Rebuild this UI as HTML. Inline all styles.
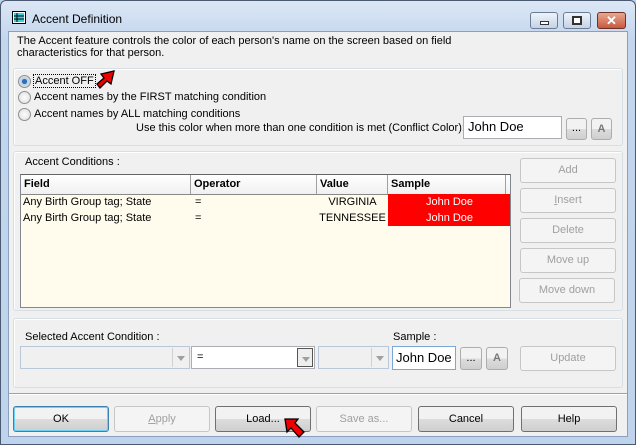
<!DOCTYPE html>
<html><head><style>
*{box-sizing:border-box;margin:0;padding:0}
body{width:636px;height:445px;overflow:hidden;font-family:"Liberation Sans",sans-serif;font-size:11px;color:#000;background:#bcd0ea}
.a{position:absolute;white-space:nowrap}
#win{position:absolute;left:0;top:0;width:636px;height:445px;background:linear-gradient(#dbe7f5,#c3d6ee 40px,#bfd3ec);border:1px solid #4a5a70;border-radius:6px 6px 0 0}
#client{position:absolute;left:8px;top:31px;width:620px;height:406px;background:#f0f0f0;border:1px solid #8aa0bc}
.grp{position:absolute;border:1px solid #d5dfe5;border-radius:3px;box-shadow:inset 1px 1px 0 #fff}
.btn{position:absolute;height:25px;border:1px solid #707070;border-radius:3px;background:linear-gradient(#f2f2f2 50%,#dddddd 50%,#cfcfcf);text-align:center;line-height:23px;font-size:11px;white-space:nowrap}
.dis{border-color:#c6c6c6;background:#f4f4f4;color:#a0a0a0}
.tb{position:absolute;background:#fff;border:1px solid #abadb3;font-size:13px;padding-left:4px;white-space:nowrap;overflow:hidden}
.radio{position:absolute;width:13px;height:13px;border-radius:50%;border:1px solid #8e8f8f;background:radial-gradient(#fdfdfd,#dcdcdc)}
.cb{position:absolute;height:23px;border:1px solid #b9c7d8;background:#f0f0f0}
.cb .ar{position:absolute;right:1px;top:1px;width:16px;height:19px;border-left:1px solid #d0d0d0}
.cb .ar:after{content:"";position:absolute;left:4px;top:8px;border:4px solid transparent;border-top:5px solid #a0a0a0}
.hd{position:absolute;top:0;height:19px;border-right:1px solid #a0a0a0;font-weight:bold;padding-left:3px;line-height:18px;background:linear-gradient(#fff,#f0f0f0)}
</style></head><body>
<div id="win">
<svg class="a" style="left:11px;top:10px" width="14" height="13"><rect x="0.5" y="0.5" width="13" height="12" fill="#fff" stroke="#000"/><rect x="2" y="2" width="10" height="9" fill="#3ad0e0"/><path d="M2 5h10M2 8h10M5 2v9" stroke="#000"/></svg>
<div class="a" style="left:31px;top:11px;font-size:12px">Accent Definition</div>
<div class="a" style="left:529px;top:11px;width:28px;height:17px;border:1px solid #6b7d95;border-radius:3px;background:linear-gradient(#eef3fa,#c4d3e6)"><div class="a" style="left:9px;top:8px;width:9px;height:4px;border:1px solid #333;background:#fff"></div></div>
<div class="a" style="left:562px;top:11px;width:28px;height:17px;border:1px solid #6b7d95;border-radius:3px;background:linear-gradient(#eef3fa,#c4d3e6)"><div class="a" style="left:8px;top:3px;width:10px;height:9px;border:2px solid #333;background:#fff"></div></div>
<div class="a" style="left:596px;top:11px;width:29px;height:17px;border:1px solid #6e3028;border-radius:3px;background:linear-gradient(#e8a890,#c75a40);color:#fff;font-weight:bold;text-align:center;font-size:13px;line-height:15px">✕</div>
</div>
<div id="client"></div>
<div class="a" style="left:17px;top:35px;font-size:11px;line-height:12px">The Accent feature controls the color of each person's name on the screen based on field<br>characteristics for that person.</div>

<div class="grp" style="left:13px;top:68px;width:610px;height:78px"></div>
<div class="radio" style="left:18px;top:75px;background:radial-gradient(#2a6fc0 30%,#bcd 35%,#eee)"></div>
<div class="a" style="left:33px;top:74px;border:1px dotted #000;padding:0 1px;line-height:12px">Accent OFF</div>
<svg class="a" style="left:94px;top:68px" width="26" height="22"><path d="M3 16 L10 10 L7 6 L20 3 L17 16 L13 13 L6 20Z" fill="#e00" stroke="#000" stroke-width="1.3"/></svg>
<div class="radio" style="left:18px;top:91px"></div>
<div class="a" style="left:34px;top:91px">Accent names by the FIRST matching condition</div>
<div class="radio" style="left:18px;top:108px"></div>
<div class="a" style="left:34px;top:108px">Accent names by ALL matching conditions</div>
<div class="a" style="left:136px;top:122px">Use this color when more than one condition is met (Conflict Color):</div>
<div class="tb" style="left:463px;top:116px;width:99px;height:23px;line-height:20px">John Doe</div>
<div class="btn" style="left:566px;top:118px;width:21px;height:22px;line-height:18px;border-color:#adadad">...</div>
<div class="btn" style="left:591px;top:118px;width:21px;height:22px;line-height:20px;border-color:#adadad;color:#777;font-weight:bold">A</div>

<div class="grp" style="left:13px;top:151px;width:610px;height:160px"></div>
<div class="a" style="left:25px;top:156px">Accent Conditions :</div>
<div class="a" style="left:20px;top:174px;width:491px;height:134px;background:#fffcee;border:1px solid #828790;border-top-color:#646464;overflow:hidden">
 <div class="hd" style="left:0;width:170px">Field</div>
 <div class="hd" style="left:170px;width:126px">Operator</div>
 <div class="hd" style="left:296px;width:71px">Value</div>
 <div class="hd" style="left:367px;width:118px">Sample</div>
 <div class="hd" style="left:485px;width:6px;border:0"></div>
 <div class="a" style="left:0;top:19px;width:491px;height:1px;background:#888"></div>
 <div class="a" style="left:2px;top:19px;line-height:16px">Any Birth Group tag; State<br>Any Birth Group tag; State</div>
 <div class="a" style="left:174px;top:19px;line-height:16px">=<br>=</div>
 <div class="a" style="left:296px;top:19px;width:71px;line-height:16px;text-align:center">VIRGINIA<br>TENNESSEE</div>
 <div class="a" style="left:367px;top:19px;width:123px;height:32px;background:#f00;color:#fff;text-align:center;line-height:16px">John Doe<br>John Doe</div>
</div>
<div class="btn dis" style="left:520px;top:158px;width:96px">Add</div>
<div class="btn dis" style="left:520px;top:188px;width:96px"><u>I</u>nsert</div>
<div class="btn dis" style="left:520px;top:218px;width:96px">Delete</div>
<div class="btn dis" style="left:520px;top:248px;width:96px">Move up</div>
<div class="btn dis" style="left:519px;top:278px;width:96px">Move down</div>

<div class="grp" style="left:13px;top:318px;width:610px;height:70px"></div>
<div class="a" style="left:25px;top:331px">Selected Accent Condition :</div>
<div class="a" style="left:393px;top:331px">Sample :</div>
<div class="cb" style="left:20px;top:346px;width:170px"><div class="ar"></div></div>
<div class="cb" style="left:191px;top:346px;width:124px;background:#fff;border-color:#abadb3"><span class="a" style="left:5px;top:4px">=</span><div class="ar" style="border:1px solid #555;background:#eee;right:1px;top:1px"></div></div>
<div class="cb" style="left:318px;top:346px;width:71px"><div class="ar"></div></div>
<div class="tb" style="left:392px;top:346px;width:64px;height:24px;line-height:22px;border-color:#7aa7d6;padding-left:3px">John Doe</div>
<div class="btn" style="left:460px;top:347px;width:22px;height:23px;line-height:20px;border-color:#adadad">...</div>
<div class="btn" style="left:486px;top:347px;width:22px;height:23px;line-height:21px;border-color:#adadad;color:#777;font-weight:bold">A</div>
<div class="btn dis" style="left:520px;top:346px;width:96px;height:25px">Update</div>

<div class="a" style="left:9px;top:393px;width:618px;height:1px;background:#a0a0a0"></div>
<div class="a" style="left:9px;top:394px;width:618px;height:1px;background:#fff"></div>
<div class="btn" style="left:13px;top:406px;width:96px;height:26px;line-height:24px;border-color:#3c7fb1;box-shadow:inset 0 0 0 1px #6cd0f8">OK</div>
<div class="btn dis" style="left:114px;top:406px;width:96px;height:26px;line-height:24px"><u>A</u>pply</div>
<div class="btn" style="left:215px;top:406px;width:96px;height:26px;line-height:24px">Load...</div>
<svg class="a" style="left:282px;top:416px" width="24" height="22"><path d="M3 3 L16 3 L13 7 L22 16 L17 21 L9 12 L5 16Z" fill="#e00" stroke="#000" stroke-width="1.3"/></svg>
<div class="btn dis" style="left:316px;top:406px;width:96px;height:26px;line-height:24px">Save as...</div>
<div class="btn" style="left:418px;top:406px;width:96px;height:26px;line-height:24px">Cancel</div>
<div class="btn" style="left:521px;top:406px;width:96px;height:26px;line-height:24px">Help</div>
</body></html>
